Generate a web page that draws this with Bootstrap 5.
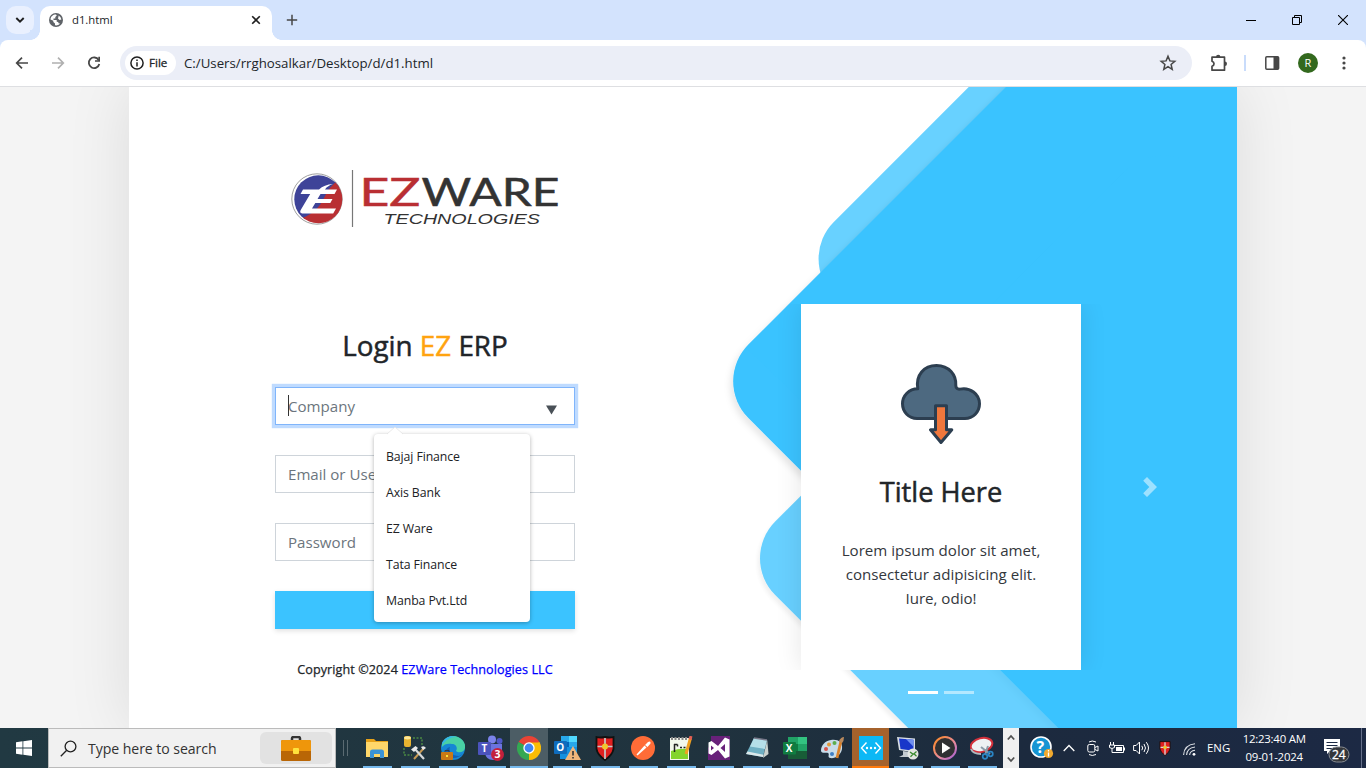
<!DOCTYPE html>
<html lang="en">
<head>
<meta charset="utf-8">
<meta name="viewport" content="width=device-width, initial-scale=1">
<title>d1.html</title>
<link href="https://cdn.jsdelivr.net/npm/bootstrap@5.3.0/dist/css/bootstrap.min.css" rel="stylesheet">
<style>
  body{font-family:"Open Sans","Noto Sans",sans-serif;height:768px;overflow:hidden;color:#212529}
  svg{display:block;flex:none}
  .tabstrip{height:40px;background:#d3e3fd;padding:6px 0 0 6px}
  .tabsearch{width:28px;height:28px;border-radius:10px;background:#e9f0fe;margin-right:6px}
  .chrometab{width:232px;height:34px;background:#fff;border-radius:10px 10px 0 0;padding:0 10px 6px 9px;position:relative;font-size:11.3px}
  .chrometab::before,.chrometab::after{content:"";position:absolute;bottom:0;width:10px;height:10px}
  .chrometab::before{left:-10px;background:radial-gradient(circle at 0 0,#d3e3fd 9.6px,#fff 10.2px)}
  .chrometab::after{right:-10px;background:radial-gradient(circle at 100% 0,#d3e3fd 9.6px,#fff 10.2px)}
  .winbtns{gap:36px;padding-right:18px;height:28px}
  .toolwrap{background:#d3e3fd}
  .toolbar{height:47px;background:#fff;border-bottom:1px solid #dedfe2;border-radius:8px 8px 0 0;padding:6px 0 6px 14px}
  .omni{width:1072px;height:34px;border-radius:17px;background:#ebeef7;padding:0 15px 0 5px;margin-left:18px}
  .chip{width:51px;height:24px;border-radius:12px;background:#fff;font-size:11.6px;-webkit-text-stroke:.3px;padding-left:5px;gap:5px}
  .url{font-size:13.25px;margin-left:8px;padding-top:1px}
  .avatar{width:20px;height:20px;background:#33691e;font-size:11px}
  .viewport{height:641px;background:#f4f4f4;overflow:hidden}
  .sheet{width:1108px;height:641px;margin-left:129px;background:#fff;box-shadow:0 0 60px rgba(0,0,0,.1)}
  .clipper{inset:0;overflow:hidden}
  .loginside{width:592px;padding:68px 146px 0}
  .brandmark{margin-left:13px}
  .loginside h3{font-size:27.8px;font-weight:400;-webkit-text-stroke:.5px;line-height:34px;margin:98px 0 25px;white-space:nowrap}
  .orange{color:#ffa310}
  .fieldbox{height:38px;border:1px solid #ced4da;padding:0 12px;color:#6c757d;font-size:15.1px;margin-bottom:30px;line-height:36px}
  .fieldbox.active{border-color:#80b5fb;box-shadow:0 0 0 3.2px #bfdbff}
  .caret{width:1px;height:21px;background:#333;left:12px;top:7px}
  .suggest{left:98px;top:46px;width:156px;height:188px;background:#fff;border-radius:4px;padding:5px 12px;box-shadow:0 1px 4px rgba(0,0,0,.3);z-index:5;color:#202124;font-size:12.3px;letter-spacing:-.1px}
  .suggest div{height:36px;line-height:36px}
  .suggest svg{top:-7px;left:12px}
  .loginbtn{height:38px;background:#3bc3ff;box-shadow:0 2px 5px rgba(0,0,0,.12)}
  .copy{font-size:12.6px;-webkit-text-stroke:.25px;line-height:20px;margin:31px -10px 0;letter-spacing:.08px;white-space:nowrap}
  .copy a{color:#00f;text-decoration:none}
  .promo{width:516px;padding-top:217px}
  .slideclip{width:330px;height:366px;overflow:hidden;padding:0 25px;margin-left:55px}
  .slidecard{width:280px;height:366px;padding:60px 30px 0;background:#fff;box-shadow:0 0 25px rgba(0,0,0,.1)}
  .slidecard h3{font-size:27.2px;font-weight:400;-webkit-text-stroke:.5px;line-height:34px;margin:31px 0 29px}
  .slidecard p{font-size:15.1px;line-height:24px;margin:0;color:#33373c;white-space:nowrap}
  .nextarrow{margin:172px 0 0 37px}
  .dots{width:280px;margin:21px 0 0 80px;gap:6px}
  .dots span{width:30px;height:3px;background:#fff}
  .taskbar{height:40px;background:linear-gradient(90deg,#213942 0,#20333e 50%,#1c2a3e 75%,#1c2944 100%);color:#fff;font-size:11.4px}
  .startbtn{width:48px}
  .searchbox{width:288px;background:#f1f1f1;border:1px solid #bbb;color:#333;font-size:14.1px;padding:0 3px 0 11px;letter-spacing:-.06px}
  .searchbox span{padding-top:1px}
  .sbcase{width:72px;height:32px;border-radius:6px;background:#e2e2e2}
  .grip{width:22px;padding-left:7px;gap:3px}
  .grip i{width:1px;height:16px;background:#5b6b72}
  .app{width:38px;height:40px;padding:0 4px;position:relative}
  .app::after{content:"";height:2px;width:29px;background:#76b9ed;position:absolute;bottom:0;left:5px}
  .app.sm{width:37px}
  .app.hot{background:#4c5d65}
  .app.hot::after{left:0;width:38px}
  .app.alert-cell{background:#a5622c}
  .app.alert-cell::after{left:0;width:37px;background:#ff7a0c}
  .scroller{width:16px;height:40px;background:#f0f0f0;margin-left:3px;padding:6px 0 5px}
  .tray{padding-left:11px}
  .clock{width:70px;line-height:18px;font-size:11.4px;letter-spacing:-.22px;margin-left:9px;white-space:nowrap}
</style>
</head>
<body class="d-flex flex-column">

<!-- tab strip -->
<header class="tabstrip d-flex align-items-start">
  <div class="tabsearch d-flex align-items-center justify-content-center"><svg width="10" height="8" viewBox="0 0 10 8"><path d="M1.3 2l3.7 3.7L8.7 2" fill="none" stroke="#1f1f1f" stroke-width="1.9"/></svg></div>
  <div class="chrometab d-flex align-items-center">
    <svg width="14" height="14" viewBox="0 0 14 14"><circle cx="7" cy="7" r="7" fill="#5f6368"/><path d="M1.500 6.500C1.600 3.500 4 1.500 7 1.500L7.800 2.600 6.300 4v1.500H4.500V7h3.200v1.700l1.500.3.300 1.300 1.500.2C9.500 12.400 7.500 12.600 6 12.300V10.500L4.300 9V7.700z" fill="#fff"/><path d="M9.700 2.600Q12 4 12.400 6.500L10.500 7 9 5.500z" fill="#fff"/></svg>
    <span class="flex-grow-1" style="margin-left:9px">d1.html</span>
    <svg width="12" height="12" viewBox="0 0 12 12"><path d="M2.200 2.200l7.600 7.600M9.800 2.200L2.200 9.800" stroke="#1f1f1f" stroke-width="1.6"/></svg>
  </div>
  <svg class="mt-2" width="12" height="12" viewBox="0 0 12 12" style="margin-left:14px"><path d="M6 .8v10.400M.8 6h10.400" stroke="#474747" stroke-width="1.500"/></svg>
  <div class="winbtns d-flex align-items-center ms-auto">
    <svg width="10" height="10" viewBox="0 0 10 10"><path d="M0 5.500h10" stroke="#000"/></svg>
    <svg width="10" height="10" viewBox="0 0 10 10"><path d="M.5 2.500h7v7h-7zM2.500 2.500v-2h7v7h-2" fill="none" stroke="#000"/></svg>
    <svg width="10" height="10" viewBox="0 0 10 10"><path d="M0 0l10 10M10 0L0 10" stroke="#000" stroke-width="1.1"/></svg>
  </div>
</header>

<!-- toolbar -->
<div class="toolwrap">
<nav class="toolbar d-flex align-items-center">
  <svg width="16" height="16" viewBox="0 0 16 16"><path d="M14 8H3M8 2.700L2.700 8 8 13.300" fill="none" stroke="#474747" stroke-width="1.700"/></svg>
  <svg width="16" height="16" viewBox="0 0 16 16" style="margin-left:20px"><path d="M2 8h11M8 2.700L13.300 8 8 13.300" fill="none" stroke="#b0b0b0" stroke-width="1.700"/></svg>
  <svg width="16" height="16" viewBox="0 0 16 16" style="margin-left:20px"><path d="M12.600 4.900A5.300 5.300 0 1 0 13.300 9" fill="none" stroke="#474747" stroke-width="1.800"/><path d="M14 1.800v5H9V5.200h3.300V1.800z" fill="#474747"/></svg>
  <div class="omni d-flex align-items-center">
    <div class="chip d-flex align-items-center"><svg width="14" height="14" viewBox="0 0 14 14"><circle cx="7" cy="7" r="6.100" fill="none" stroke="#1f1f1f" stroke-width="1.500"/><path d="M7 6.200v4.200M7 3.400v1.500" stroke="#1f1f1f" stroke-width="1.500"/></svg>File</div>
    <span class="url flex-grow-1">C:/Users/rrghosalkar/Desktop/d/d1.html</span>
    <svg width="18" height="18" viewBox="0 0 18 18"><path d="M9 2.300l1.900 4.600 4.900.4-3.700 3.200 1.100 4.800L9 12.700l-4.200 2.600 1.100-4.800-3.700-3.200 4.900-.4z" fill="none" stroke="#474747" stroke-width="1.500"/></svg>
  </div>
  <svg width="18" height="18" viewBox="0 0 18 18" style="margin-left:18px"><path d="M2 3.200h12.500v13H2v-4c2.700-.8 2.700-4.200 0-5z" fill="none" stroke="#474747" stroke-width="1.700" stroke-linejoin="round"/><path d="M6 3a2.200 2.200 0 0 1 4.400 0zM14.800 7.500a2.200 2.200 0 0 1 0 4.400z" fill="#474747"/></svg>
  <svg width="2" height="16" style="margin-left:16px"><path d="M1 0v16" stroke="#c9dcfb" stroke-width="2"/></svg>
  <svg width="16" height="16" viewBox="0 0 16 16" style="margin-left:18px"><rect x="1.800" y="1.800" width="12.800" height="12.400" rx="1" fill="none" stroke="#474747" stroke-width="1.500"/><path d="M9.500 2h5v12h-5z" fill="#474747"/></svg>
  <div class="avatar rounded-circle text-white d-flex align-items-center justify-content-center" style="margin-left:18px">R</div>
  <svg width="4" height="14" viewBox="0 0 4 14" style="margin-left:24px"><g fill="#474747"><circle cx="2" cy="2" r="1.600"/><circle cx="2" cy="7" r="1.600"/><circle cx="2" cy="12" r="1.600"/></g></svg>
</nav>
</div>

<!-- page -->
<main class="viewport">
  <div class="sheet position-relative">
    <div class="clipper position-absolute">
      <svg width="1108" height="641" viewBox="129 87 1108 641">
        <defs><filter id="soft" x="-10%" y="-10%" width="120%" height="120%"><feDropShadow dx="-3" dy="4" stdDeviation="3" flood-opacity=".09"/></filter>
        <filter id="faint" x="-10%" y="-10%" width="120%" height="120%"><feDropShadow dx="-2" dy="4" stdDeviation="2" flood-opacity=".08"/></filter></defs>
        <g fill="#3bc3ff">
          <rect x="-300" y="-300" width="600" height="600" rx="52" transform="translate(1221.300 258.700) rotate(45)" opacity=".77"/>
          <g filter="url(#soft)"><rect x="-400" y="-400" width="800" height="800" rx="52" transform="translate(1277.300 381.300) rotate(45)"/></g>
          <g filter="url(#faint)" opacity=".77"><rect x="-300" y="-300" width="600" height="600" rx="52" transform="translate(1162.700 558.300) rotate(45)"/></g>
          <path d="M1006.500 87L746 347.500 801 400V304h280v366h-80.500l58 58H1237V87z" opacity=".6"/>
        </g>
      </svg>
    </div>
    <div class="position-relative d-flex">
      <section class="loginside text-center">
        <svg class="brandmark" width="276" height="75" viewBox="288 155 276 75">
          <defs><clipPath id="disc"><circle cx="318.300" cy="199.300" r="24"/></clipPath></defs>
          <circle cx="317" cy="199" r="25.200" fill="#fff" stroke="#888" stroke-width=".8"/>
          <g clip-path="url(#disc)"><path d="M290 170h60v14c-14 2-20 10-24 18-5 11-14 16-36 22z" fill="#3e4398"/><path d="M350 176c-13 3-20 10-25 20-6 13-14 20-29 24v10h54z" fill="#b92f33"/></g>
          <path d="M303 189.500h16q5-5 14-5.500-6 2-8 5.500h12l-2.500 4.500h-14l-3 5h15l-2.200 4h-15l-3.300 5.500h24l-2.800 5h-31q-3-.5-1.500-3.500l9.500-16h-9.700z" fill="#fff"/>
          <path d="M352.500 170v57" stroke="#777" stroke-width="1.200"/>
          <text x="359.500" y="205.500" font-family="Lato" font-size="39.500" fill="#b92f33" stroke="#b92f33" stroke-width=".5" textLength="61" lengthAdjust="spacingAndGlyphs">EZ</text>
          <text x="421.500" y="205.500" font-family="Lato" font-size="39.500" fill="#333" stroke="#333" stroke-width=".5" textLength="138" lengthAdjust="spacingAndGlyphs">WARE</text>
          <text x="383.500" y="223.500" font-family="Liberation Sans" font-size="13.800" font-style="italic" fill="#333" textLength="156.500" lengthAdjust="spacingAndGlyphs">TECHNOLOGIES</text>
        </svg>
        <h3>Login <span class="orange">EZ</span> ERP</h3>
        <div class="fieldbox active d-flex justify-content-between align-items-center position-relative bg-white">
          <span>Company</span><span class="caret position-absolute"></span>
          <svg width="11" height="10" viewBox="0 0 11 10" style="margin:8px 5px 0 0"><path d="M0 .5h11L5.500 9.500z" fill="#495057"/></svg>
          <div class="suggest position-absolute text-start">
            <svg class="position-absolute" width="18" height="8" viewBox="0 0 18 8"><path d="M0 8l9-8 9 8z" fill="#fff"/><path d="M1 7l8-7 8 7" fill="none" stroke="#ddd" stroke-width=".6"/></svg>
            <div>Bajaj Finance</div><div>Axis Bank</div><div>EZ Ware</div><div>Tata Finance</div><div>Manba Pvt.Ltd</div>
          </div>
        </div>
        <div class="fieldbox text-start">Email or Username</div>
        <div class="fieldbox text-start">Password</div>
        <div class="loginbtn"></div>
        <p class="copy">Copyright ©2024 <a href="#">EZWare Technologies LLC</a></p>
      </section>
      <section class="promo">
        <div class="d-flex align-items-start">
          <div class="slideclip">
            <div class="slidecard text-center">
              <svg class="mx-auto" width="80" height="80" viewBox="0 0 80 80">
                <path d="M16 54.500C8 54.500 1.500 48 1.500 39.800S8 24.800 16.800 24.800C14.500 11 23 1.500 35.500 1.500S55.500 11 54.800 21.500c0 2.500 1.700 4 4.200 3.600C69 23 78.500 30 78.500 39.800 78.500 48 72 54.500 64 54.500z" fill="#4d6980" stroke="#2c3e50" stroke-width="3" stroke-linejoin="round"/>
                <path d="M34.500 41.800h11v24h5.300L40 78.500 29.500 65.800h5z" fill="#f0773c" stroke="#2c3e50" stroke-width="3" stroke-linejoin="round"/>
              </svg>
              <h3>Title Here</h3>
              <p>Lorem ipsum dolor sit amet,<br>consectetur adipisicing elit.<br>Iure, odio!</p>
            </div>
          </div>
          <svg class="nextarrow" width="14" height="22" viewBox="0 0 14 22"><path d="M4 1l10 10L4 21 .2 17.200 6.300 11 .2 4.800z" fill="#fff" opacity=".5"/></svg>
        </div>
        <div class="dots d-flex justify-content-center"><span></span><span class="opacity-50"></span></div>
      </section>
    </div>
  </div>
</main>

<!-- taskbar -->
<footer class="taskbar d-flex align-items-center">
  <div class="startbtn d-flex justify-content-center"><svg width="16" height="16" viewBox="0 0 16 16"><path d="M0 2.200l6.500-.9v6.300H0zM7.300 1.200L16 0v7.600H7.300zM0 8.400h6.500v6.300L0 13.800zM7.300 8.400H16V16l-8.700-1.200z" fill="#fff"/></svg></div>
  <div class="searchbox d-flex align-items-center align-self-stretch">
    <svg width="17" height="17" viewBox="0 0 17 17"><circle cx="10.500" cy="6.500" r="5.400" fill="none" stroke="#222" stroke-width="1.300"/><path d="M6.700 10.300L.8 16.300" stroke="#222" stroke-width="1.300"/></svg>
    <span class="flex-grow-1" style="margin-left:11px">Type here to search</span>
    <div class="sbcase d-flex align-items-center justify-content-center"><svg width="30" height="25" viewBox="0 0 30 25"><path d="M11 5V2.500Q11 1 12.500 1h5Q19 1 19 2.500V5" fill="none" stroke="#333" stroke-width="2.500"/><rect y="4" width="30" height="21" rx="1.500" fill="#b96606"/><path d="M0 15V5.500Q0 4 1.500 4h27Q30 4 30 5.500V15z" fill="#ef960b"/><rect x="12" y="12" width="6" height="6" rx="1" fill="#ffe23c"/></svg></div>
  </div>
  <div class="grip d-flex"><i></i><i></i></div>

  <div class="app d-flex align-items-center justify-content-center"><svg width="22" height="24" viewBox="0 0 22 24"><path d="M0 3h8l2 2h12v4H0z" fill="#e7a219"/><path d="M0 6h22v15H0z" fill="#ffd76a"/><path d="M4 22v-6q0-2.500 2.500-2.500h9q2.500 0 2.500 2.500v6h-4v-4H8v4z" fill="#3b93d6"/></svg></div>
  <div class="app d-flex align-items-center justify-content-center"><svg width="24" height="24" viewBox="0 0 24 24"><rect x="1" y="0" width="7" height="11" rx="2" fill="#e8b430"/><ellipse cx="4.500" cy="1.800" rx="3.500" ry="1.600" fill="#ffe89a"/><path d="M10 2h9v8M1 12v7h8" fill="none" stroke="#5eb345" stroke-dasharray="2 1.500"/><path d="M11 23l10-11" stroke="#c69a55" stroke-width="2"/><path d="M11 12l10 11" stroke="#d5d9db" stroke-width="2.200"/><path d="M8 13.500l4.500-3.500 2.500 2-4 4zM18 11q3-2 5 1l-3 2z" fill="#e8eaeb"/></svg></div>
  <div class="app d-flex align-items-center justify-content-center"><svg width="24" height="24" viewBox="0 0 24 24"><circle cx="12" cy="12" r="12" fill="#1687d4"/><path d="M1 8C4 0 12-1 17 1c5 2 8 7 7 11-1 5-7 5-9 3 2-3 0-7-4-7-4-1-8 0-10 3z" fill="#49d1a5"/><path d="M1 7C4 1 10-1 15 1 9 1 5 4 1 9z" fill="#35b7e8"/><path d="M9 11c-2 4 2 9 9 9l4-2c-4 4-12 6-16 1-3-3-1-7 3-8z" fill="#1160b5"/><rect x="0" y="16" width="12" height="8" rx="1" fill="#c97916"/><path d="M4 16v-1.500h4V16" stroke="#333" fill="none" stroke-width=".8"/><rect x="5" y="19" width="2" height="2" fill="#ffe23c"/></svg></div>
  <div class="app d-flex align-items-center justify-content-center"><svg width="28" height="26" viewBox="0 0 28 26"><circle cx="15" cy="4.500" r="4" fill="#7b83eb"/><circle cx="22.500" cy="6" r="3" fill="#5059c9"/><path d="M8 9h17v9q-1 7-9 7-7 0-8-7z" fill="#6b74df"/><rect x="1" y="7" width="13" height="13" rx="1" fill="#4b53bc"/><text x="4.500" y="17" font-size="10" font-weight="700" fill="#fff">T</text><circle cx="20.500" cy="19.500" r="6.500" fill="#c4203c"/><text x="17.500" y="23.400" font-size="10.500" font-weight="700" fill="#fff">3</text></svg></div>
  <div class="app hot d-flex align-items-center justify-content-center"><svg width="24" height="24" viewBox="0 0 24 24"><path d="M12 12L1.600 6A12 12 0 0 1 22.400 6z" fill="#ea4335"/><path d="M12 12L22.400 6A12 12 0 0 1 12 24z" fill="#fbbc05"/><path d="M12 12v12A12 12 0 0 1 1.600 6z" fill="#34a853"/><path d="M12 6.500h10.600L12 24l4.800-9z" fill="#fbbc05"/><circle cx="12" cy="12" r="5.700" fill="#fff"/><circle cx="12" cy="12" r="4.400" fill="#4285f4"/></svg></div>
  <div class="app d-flex align-items-center justify-content-center"><svg width="28" height="26" viewBox="0 0 28 26"><path d="M8 1h16v12H8z" fill="#28a8ea"/><path d="M16 1h8v6h-8z" fill="#50d9ff"/><path d="M8 7h8v6H8z" fill="#0364b8"/><path d="M7 12l17 0v12H7z" fill="#1490df"/><rect x="1" y="6" width="13" height="13" rx="1" fill="#0f6cbd"/><text x="3.300" y="16.200" font-size="10" font-weight="700" fill="#fff">O</text><path d="M20 11l8 14H12z" fill="#f0b57a"/><path d="M20 16v4.500M20 22v1.600" stroke="#333" stroke-width="1.600"/></svg></div>
  <div class="app d-flex align-items-center justify-content-center"><svg width="20" height="25" viewBox="0 0 20 25"><path d="M1.500 1q4 1 8.500 0 4.500 1 8.500 0v12q-1 6-8.500 11Q2.500 19 1.500 13z" fill="#e02020" stroke="#111" stroke-width="1.800"/><path d="M10 2v21M2.500 10.500h15" stroke="#c5c8ca" stroke-width="1.700"/><circle cx="10" cy="10.500" r="3" fill="#f2c52d"/></svg></div>
  <div class="app d-flex align-items-center justify-content-center"><svg width="24" height="24" viewBox="0 0 24 24"><circle cx="12" cy="12" r="12" fill="#ff6c37"/><path d="M5.500 18.500l8-9 2 2-9 8zM14 9l3-3q3-1.500 2.500 1.500L16.500 11z" fill="#fff"/></svg></div>
  <div class="app d-flex align-items-center justify-content-center"><svg width="24" height="24" viewBox="0 0 24 24"><path d="M1 2h19v22H1z" fill="#f3f8ec"/><path d="M2 15q9-3 17-2v10H2z" fill="#83d42c"/><path d="M2 2.500h17" stroke="#888" stroke-width="3" stroke-dasharray="2 1.500"/><path d="M5.500 8v8M5 8.500h3.500M8.500 8.500v2M11 11.500h2M14.500 11.500h2" stroke="#222" fill="none" stroke-width="1.500"/><path d="M21.500 2L17 18" stroke="#efa020" stroke-width="3"/><path d="M22 0l-1 3.500" stroke="#e35e54" stroke-width="3"/></svg></div>
  <div class="app d-flex align-items-center justify-content-center"><svg width="24" height="24" viewBox="0 0 24 24"><path d="M1 12l3-3V0h19v24H1z" fill="#68217a"/><path d="M1.500 6.500l3-1.500 6.500 5 7-8.500 4.500 2v17l-4.500 2-7-8.500-6.500 5-3-1.500zM4 9.500v5L7 12zm14-1.500L13.500 12l4.500 4z" fill="#fff" fill-rule="evenodd"/></svg></div>
  <div class="app d-flex align-items-center justify-content-center"><svg width="24" height="24" viewBox="0 0 24 24"><path d="M9 2l13 2-4 17-17-3z" fill="#6fb0c3"/><path d="M9 2l13 2-2.200 9L5 10.500z" fill="#b5dfe8"/><path d="M1 18l17 3 .6-2.300L2.500 15.500z" fill="#dbe8ea"/><path d="M18 22l4.200-18 1.300 14z" fill="#c9d2ce"/><path d="M9 2l13 2" stroke="#778" stroke-width="1.500"/></svg></div>
  <div class="app d-flex align-items-center justify-content-center"><svg width="24" height="24" viewBox="0 0 24 24"><path d="M5 1h10v7H5z" fill="#21a366"/><path d="M15 1h9v7h-9z" fill="#33c481"/><path d="M5 8h10v7H5z" fill="#107c41"/><path d="M15 8h9v7h-9z" fill="#21a366"/><path d="M5 15h19v8H5z" fill="#185c37"/><rect y="6" width="13" height="12.500" rx="1" fill="#107c41"/><text x="2.800" y="16" font-size="10" font-weight="700" fill="#fff">X</text></svg></div>
  <div class="app d-flex align-items-center justify-content-center"><svg width="24" height="24" viewBox="0 0 24 24"><path d="M10 4c7-1 12 2 11 9-1 6-7 10-12 9-3-1 0-4-2-5s-6 1-7-2C0 9 4 5 10 4z" fill="#c8dce9"/><circle cx="5" cy="13" r="2" fill="#d9534a"/><circle cx="8" cy="8.500" r="2" fill="#e49a3b"/><circle cx="13.500" cy="7" r="2" fill="#5cae4d"/><circle cx="11" cy="18" r="2" fill="#3f7fc4"/><path d="M20 5l-4 17" stroke="#d9822b" stroke-width="2.800"/><path d="M18 5q2-4 5-4 0 4-2 6z" fill="#b98a5e"/></svg></div>
  <div class="app sm alert-cell d-flex align-items-center justify-content-center"><svg width="24" height="24" viewBox="0 0 24 24"><path d="M0 0h24v24H0z" fill="#0cb8f5"/><path d="M7.500 6.500L2.500 12l5 5.500M16.500 6.500l5 5.500-5 5.500" fill="none" stroke="#fff" stroke-width="1.400"/><g fill="#fff"><circle cx="8" cy="12" r="1.200"/><circle cx="12" cy="12" r="1.200"/><circle cx="16" cy="12" r="1.200"/></g></svg></div>
  <div class="app sm d-flex align-items-center justify-content-center"><svg width="24" height="24" viewBox="0 0 24 24"><path d="M1 1l18 1.500v14L3 14z" fill="#d8dee3"/><path d="M3 2.500l14.500 1.200v11L4.500 13z" fill="#1836c9"/><path d="M10 3l7.500.7v7z" fill="#6f8ff0"/><path d="M7 15l6 1v3l3 2H3l4-2z" fill="#c3cad0"/><circle cx="17" cy="18" r="5.500" fill="#e4e6e3"/><path d="M14 16l3 2.200-2.500 2.500M20.500 15.500l-2.500 2.200 2.500 2.500" fill="none" stroke="#3a8b2f" stroke-width="1.300"/></svg></div>
  <div class="app sm d-flex align-items-center justify-content-center"><svg width="24" height="24" viewBox="0 0 24 24"><defs><linearGradient id="ring" x2="1" y2="1"><stop stop-color="#ff8a1e"/><stop offset=".6" stop-color="#e58aa0"/><stop offset="1" stop-color="#a05bd6"/></linearGradient></defs><circle cx="12" cy="12" r="11" fill="#2f3032" stroke="url(#ring)" stroke-width="2"/><path d="M9 6.500v11l8.500-5.500z" fill="#fff"/></svg></div>
  <div class="app sm d-flex align-items-center justify-content-center"><svg width="24" height="24" viewBox="0 0 24 24"><ellipse cx="11.500" cy="9" rx="11" ry="6.800" transform="rotate(-14 11.500 9)" fill="#eef1f3" stroke="#d3303b" stroke-width="2"/><path d="M1 13q2 5 10 5" stroke="#aeb8bf" stroke-width="2" fill="none"/><path d="M11 11l9 7M18 10l-3 9" stroke="#8b9ba8" stroke-width="2"/><circle cx="20.500" cy="18" r="2.300" fill="none" stroke="#2a85c4" stroke-width="1.700"/><circle cx="15" cy="20.500" r="2.300" fill="none" stroke="#2a85c4" stroke-width="1.700"/></svg></div>

  <div class="scroller d-flex flex-column align-items-center justify-content-between"><svg width="8" height="7" viewBox="0 0 8 7"><path d="M.8 5.500L4 2l3.200 3.500" fill="none" stroke="#505050" stroke-width="1.800"/></svg><svg width="8" height="7" viewBox="0 0 8 7"><path d="M.8 1.500L4 5l3.200-3.500" fill="none" stroke="#505050" stroke-width="1.800"/></svg></div>

  <div class="tray d-flex align-items-center flex-grow-1">
    <svg width="24" height="24" viewBox="0 0 24 24"><circle cx="11" cy="11" r="10" fill="#1695d3" stroke="#fff" stroke-width="1.600"/><text x="6.500" y="17" font-size="16" font-weight="700" fill="#fff">?</text><circle cx="18.500" cy="17.500" r="4.600" fill="#f0a92e"/><path d="M18.500 16.500v4M18.500 14v1.500" stroke="#fff" stroke-width="1.300"/></svg>
    <svg width="12" height="8" viewBox="0 0 12 8" style="margin-left:9px"><path d="M.7 7L6 1.500 11.300 7" fill="none" stroke="#fff" stroke-width="1.300"/></svg>
    <svg width="12" height="16" viewBox="0 0 12 16" style="margin-left:12px"><rect x=".8" y="4.500" width="7" height="7.500" rx="1.500" fill="none" stroke="#fff"/><path d="M8 7.500l3-1.500v5L8 9.500M2 2q3-2 7 0M2 14.500q3 2 7 0" fill="none" stroke="#fff"/></svg>
    <svg width="16" height="14" viewBox="0 0 16 14" style="margin-left:10px"><path d="M5.500 4.500h9v7h-9M15.500 6.500v3" fill="none" stroke="#fff"/><path d="M7 6h6v4H7z" fill="#fff"/><path d="M1.500 1v3M4.500 1v3M.5 4h5v2.500q-2.500 2-5 0zM3 7.500v4h3" fill="none" stroke="#fff"/></svg>
    <svg width="17" height="16" viewBox="0 0 17 16" style="margin-left:8px"><path d="M.6 5.500h2.500L6.500 2v12L3.100 10.500H.6zM8.800 5.800q1.700 2.200 0 4.400M11 4q3 4 0 8M13.300 2.200q4.400 5.800 0 11.600" fill="none" stroke="#fff"/></svg>
    <svg width="12" height="15" viewBox="0 0 20 25" style="margin-left:9px"><path d="M1.500 1h17v12q-1 6-8.500 11Q2.500 19 1.500 13z" fill="#e02020" stroke="#111" stroke-width="1.500"/><path d="M10 2v21M2.500 10.500h15" stroke="#d5d8da" stroke-width="2.200"/><circle cx="10" cy="10.500" r="3.200" fill="#f2c52d"/></svg>
    <svg width="13" height="13" viewBox="0 0 13 13" style="margin:2px 0 0 12px"><g fill="none" stroke="#dfe3e8"><path d="M.6 12Q1 2 12 .8M3.600 12Q4 5 12 4M6.600 12Q7 8 12 7.300" stroke-width="1.100"/></g><circle cx="11" cy="11.300" r="1.400" fill="#fff"/></svg>
    <span style="margin-left:11px">ENG</span>
    <div class="clock text-center">12:23:40 AM<br>09-01-2024</div>
    <svg width="26" height="26" viewBox="0 0 26 26" style="margin:5px 0 0 15px"><path d="M0 1h16v12H6l-3 3v-3H0z" fill="#fff"/><path d="M2.500 4.500h11M2.500 7.500h11M2.500 10.500h7" stroke="#1c2944"/><rect x="5" y="9" width="20" height="15" rx="7.500" fill="#34373c" stroke="#888c92"/><text x="8" y="21" font-size="12" stroke="#fff" stroke-width=".3" fill="#fff">24</text></svg>
    <svg class="ms-auto me-1" width="1" height="40"><path d="M.5 0v40" stroke="#66708a"/></svg>
  </div>
</footer>
<script src="https://cdn.jsdelivr.net/npm/bootstrap@5.3.0/dist/js/bootstrap.bundle.min.js"></script>
</body>
</html>
